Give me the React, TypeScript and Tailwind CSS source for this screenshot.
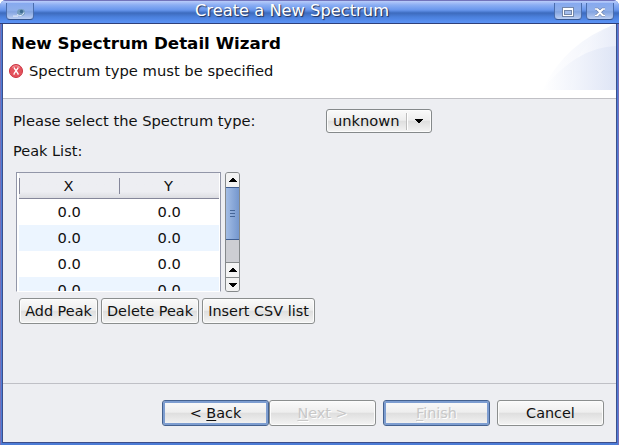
import type { ReactNode } from "react";

function cx(...names: string[]) {
  return names.join(" ");
}

function Button({ children, className, focus = false, disabled = false }: { children: ReactNode; className: string; focus?: boolean; disabled?: boolean }) {
  return (
    <button
      className={cx(
        "flex h-[26px] shrink-0 items-center justify-center whitespace-nowrap rounded-[3px] border bg-[linear-gradient(180deg,#fafafa_0%,#eeeeee_46%,#dfdfdf_52%,#f4f4f4_100%)] p-0 leading-[18px]",
        focus ? "border-[#44618f] shadow-[inset_0_0_0_2px_#7d9dd0]" : "border-[#8b8e8e] shadow-[inset_0_0_0_1px_#fcfcfc]",
        disabled ? "text-[#c8c8c8] [text-shadow:1px_1px_0_#fff]" : "text-[#111]",
        className,
      )}
    >
      {children}
    </button>
  );
}

function Mnemonic({ children }: { children: string }) {
  return <span className="underline decoration-1 underline-offset-2">{children}</span>;
}

function WindowButton({ children }: { children: ReactNode }) {
  return (
    <div className="mt-[2px] flex h-[17px] w-[28px] shrink-0 items-center justify-center rounded-b-[4px] border border-t-0 border-x-[#4a6dac] border-b-[#34558f] bg-[linear-gradient(180deg,#86a9ef_0%,#8fafea_45%,#83a4e0_55%,#bccff3_100%)] pt-[2px]">
      {children}
    </div>
  );
}

function TitleBar() {
  return (
    <header className="flex h-[24px] shrink-0 items-start border-t border-b border-t-[#7274bb] border-b-[#2f3f78] bg-[linear-gradient(180deg,#b9ccfa_0px,#8baef3_4px,#6896ec_9px,#4a7ad0_11px,#3d6bbd_12px,#4b80dc_16px,#5b93f6_22px)] pl-[6px] pr-[5px]">
      <WindowButton>
        <svg width="16" height="12" viewBox="0 0 16 12">
          <path d="M1 10.2h5" stroke="#d9e3f5" strokeWidth="1.2" />
          <ellipse cx="9" cy="6.5" rx="4" ry="3.4" fill="#759dbd" />
          <path d="M5 8.5q5 3 7-2" stroke="#e1eafa" fill="none" />
          <circle cx="9.5" cy="5.5" r="1.7" fill="#3f6c91" />
        </svg>
      </WindowButton>
      <h1 className="h-[21px] flex-1 whitespace-nowrap pr-[4px] text-center text-[16.3px] leading-[20px] text-white [text-shadow:1px_1px_1px_#222f51]">Create a New Spectrum</h1>
      <div className="flex gap-[4px]">
        <WindowButton>
          <svg width="12" height="10" viewBox="0 0 12 10" shapeRendering="crispEdges">
            <path d="M0 0h12v10H0z" fill="#7386a8" />
            <path d="M1 1h10v8H1z" fill="#fff" />
            <path d="M2 3h8v5H2z" fill="#7386a8" />
            <path d="M3 4h6v3H3z" fill="#a4bdeb" />
          </svg>
        </WindowButton>
        <WindowButton>
          <svg width="12" height="10" viewBox="0 0 12 10">
            <path d="M1 2h2.5L6 4.3 8.5 2H11M1 8.5h2.5L6 5.7l2.5 2.8H11M3 2.5l6 5.5M9 2.5L3 8" fill="none" stroke="#62779f" strokeWidth="2.6" />
            <path d="M1 2h2.5L6 4.3 8.5 2H11M1 8.5h2.5L6 5.7l2.5 2.8H11M3 2.5l6 5.5M9 2.5L3 8" fill="none" stroke="#fff" strokeWidth="1.6" />
          </svg>
        </WindowButton>
      </div>
    </header>
  );
}

function Banner() {
  return (
    <section className="flex h-[75px] shrink-0 border-b border-[#c0c0c5] bg-white">
      <div className="flex-1 pl-[8px] pt-[8px]">
        <h2 className="whitespace-nowrap text-[16.7px] font-bold leading-[22px] text-black">New Spectrum Detail Wizard</h2>
        <div className="mt-[7px] flex items-center leading-[20px]">
          <svg width="14" height="14" viewBox="0 0 14 14" className="-ml-[2px] mr-[6px]">
            <circle cx="7" cy="7" r="6.5" fill="#e4525c" stroke="#cb3442" />
            <path d="M3 3.5Q7 0 11 3.5" fill="none" stroke="#f19a9e" />
            <path d="M4.7 4h1M8.5 4h1M5.2 4.2l3.8 5.5M9 4.2L5 9.7M4.5 10h1.2M8.4 10h1.3" stroke="#fff" strokeWidth="1.4" />
          </svg>
          <p className="whitespace-nowrap text-[14.72px]">Spectrum type must be specified</p>
        </div>
      </div>
      <svg width="74" height="66" viewBox="0 0 74 66" className="shrink-0">
        <defs>
          <linearGradient id="sweep"><stop stopColor="#fff" /><stop offset="1" stopColor="#dce3f5" /></linearGradient>
          <linearGradient id="glow"><stop stopColor="#fff" /><stop offset="1" stopColor="#e5eaf8" /></linearGradient>
        </defs>
        <path d="M0 66Q24 18 74 0v66z" fill="url(#glow)" opacity=".65" />
        <path d="M33 38Q49 8 74 0v66H28z" fill="url(#glow)" opacity=".7" />
        <path d="M0 66Q35 23 74 22v44z" fill="url(#sweep)" opacity=".8" />
      </svg>
    </section>
  );
}

function Arrow({ down = false }: { down?: boolean }) {
  return (
    <svg width="8" height="4" viewBox="0 0 8 4" shapeRendering="crispEdges">
      <path d={down ? "M0 0h8v1H7v1H6v1H5v1H3V3H2V2H1V1H0z" : "M3 0h2v1h1v1h1v1h1v1H0V3h1V2h1V1h1z"} />
    </svg>
  );
}

function ScrollBar() {
  return (
    <div className="flex h-[120px] w-[15px] flex-col overflow-hidden rounded-[3px] border border-[#85898b] bg-[#cdced3]">
      <div className="flex h-[14px] shrink-0 items-center justify-center bg-[#f2f2f2]"><Arrow /></div>
      <div className="flex h-[53px] shrink-0 flex-col items-center justify-center gap-[2px] border-y border-[#405e91] bg-linear-to-r from-[#a3bde5] to-[#7597ce]">
        {[0, 1, 2].map((line) => <i key={line} className="h-px w-[5px] bg-[#466698]" />)}
      </div>
      <div className="flex-1" />
      <div className="flex h-[15px] shrink-0 items-center justify-center border-t border-[#85898b] bg-[#f4f4f4]"><Arrow /></div>
      <div className="flex h-[14px] shrink-0 items-center justify-center border-t border-[#85898b] bg-[#f2f2f2]"><Arrow down /></div>
    </div>
  );
}

function PeakTable() {
  return (
    <div className="h-[120px] w-[205px] overflow-hidden border border-[#9296a8] border-b-white bg-white pl-[2px] pr-[1px]">
      <div className="flex h-[26px] border-b border-[#85879a] bg-linear-to-b from-[#edeef2] from-75% to-[#dcdde2]">
        {["X", "Y"].map((name) => (
          <div key={name} className="flex w-[100px] items-center">
            <i className="h-[16px] w-px bg-[#85879a]" />
            <span className="flex-1 pr-[2px] text-center leading-[26px]">{name}</span>
          </div>
        ))}
      </div>
      {[0, 1, 2, 3].map((row) => (
        <div key={row} className="flex h-[26px] leading-[26px] odd:bg-[#ecf5ff] even:bg-white">
          <span className="w-[101px] text-center">0.0</span>
          <span className="w-[100px] text-center">0.0</span>
        </div>
      ))}
    </div>
  );
}

export default function App() {
  return (
    <div className="flex h-[445px] w-[619px] flex-col overflow-hidden rounded-t-[6px] bg-[#4c7cd6] font-['DejaVu_Sans',sans-serif] text-[14.67px] text-[#111]">
      <TitleBar />
      <div className="flex flex-1 border-x border-[#7970b7]">
        <main className="mx-[1px] mb-[2px] flex flex-1 flex-col border-x border-b border-[#3d4e8b] bg-[#edeef2]">
          <Banner />
          <div className="flex h-[284px] shrink-0 flex-col">
            <div className="mt-[10px] flex h-[24px] items-center pl-[10px]">
              <label className="w-[313px] whitespace-nowrap">Please select the Spectrum type:</label>
              <button className="flex h-[24px] w-[106px] items-center rounded-[3px] border border-[#85898b] bg-[linear-gradient(180deg,#fafafa_0%,#eeeeee_46%,#dfdfdf_52%,#f4f4f4_100%)] p-0 pl-[6px] shadow-[inset_0_0_0_1px_#fcfcfc]">
                <span>unknown</span>
                <i className="ml-auto mr-[7px] h-[17px] w-[2px] border-l border-[#bdbdbd] bg-white" />
                <span className="mr-[8px] flex"><Arrow down /></span>
              </button>
            </div>
            <div className="mt-[6px] h-[24px] pl-[10px] text-[14.5px] leading-[24px]">Peak List:</div>
            <div className="mt-[9px] flex gap-[4px] pl-[13px]">
              <PeakTable />
              <ScrollBar />
            </div>
            <div className="mt-[6px] flex gap-[3px] pl-[16px] text-[14.4px]">
              <Button className="w-[79px]">Add Peak</Button>
              <Button className="w-[98px]">Delete Peak</Button>
              <Button className="w-[113px]">Insert CSV list</Button>
            </div>
          </div>
          <footer className="flex flex-1 justify-end border-t border-[#bfc0c6] pr-[12px] pt-[16px] text-[14.4px]">
            <Button className="w-[107px]" focus><span>&lt; <Mnemonic>B</Mnemonic>ack</span></Button>
            <Button className="w-[107px]" disabled><span><Mnemonic>N</Mnemonic>ext &gt;</span></Button>
            <Button className="ml-[7px] w-[107px]" focus disabled><span><Mnemonic>F</Mnemonic>inish</span></Button>
            <Button className="ml-[7px] w-[107px]">Cancel</Button>
          </footer>
        </main>
      </div>
    </div>
  );
}
